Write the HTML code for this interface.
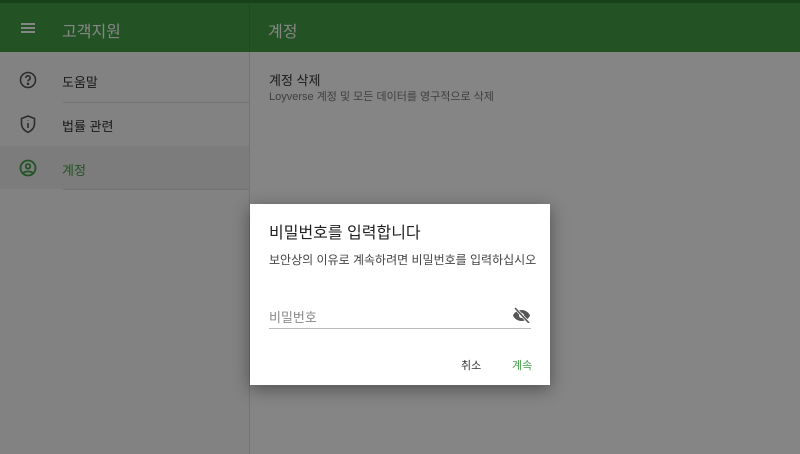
<!DOCTYPE html>
<html><head><meta charset="utf-8"><style>
*{margin:0;padding:0;box-sizing:border-box}
body{width:800px;height:454px;overflow:hidden;position:relative;background:#fff;font-family:"Liberation Sans","Noto Sans CJK KR",sans-serif}
.abs{position:absolute}
.hdr{left:0;top:0;width:800px;height:52px;background:#43a047}
.top{left:0;top:0;width:800px;height:3px;background:#2e7d32}
.side{left:0;top:52px;width:250px;height:402px;background:#fafafa;border-right:1px solid #ddd}
.sel{left:0;top:146px;width:249px;height:43px;background:#eee}
.div{height:1px;background:#ddd;left:63px;width:186px}
.t{white-space:nowrap}
.ov{left:0;top:0;width:800px;height:454px;background:rgba(0,0,0,0.48)}
.dlg{left:250px;top:204px;width:300px;height:181px;background:#fff;box-shadow:0 4px 16px rgba(0,0,0,.4)}
</style></head><body>
<div class="abs hdr"></div><div class="abs top"></div>
<div class="abs" style="left:249px;top:3px;width:1px;height:49px;background:#3a8f3e"></div>
<div class="abs" style="left:21px;top:23px;width:14px;height:2px;background:#fff;box-shadow:0 4px 0 #fff,0 8px 0 #fff"></div>
<div class="abs t" style="left:62px;top:18px;font-size:16px;color:#fff">고객지원</div>
<div class="abs t" style="left:268px;top:18px;font-size:16px;color:#fff">계정</div>
<div class="abs side"></div>
<div class="abs sel"></div>
<div class="abs div" style="top:102px"></div>
<div class="abs div" style="top:189px"></div>
<svg class="abs" style="left:19px;top:71px" width="18" height="18" viewBox="0 0 18 18" fill="none" stroke="#555" stroke-width="1.6"><circle cx="9" cy="9" r="7.5"/><path d="M6.8 7a2.2 2.2 0 1 1 3 2c-.6.3-.8.7-.8 1.4"/><circle cx="9" cy="12.8" r=".5" fill="#555"/></svg>
<div class="abs t" style="left:62px;top:72px;font-size:13px;color:#333">도움말</div>
<svg class="abs" style="left:20px;top:115px" width="16" height="19" viewBox="0 0 16 19" fill="none" stroke="#555" stroke-width="1.6"><path d="M8 1L1.5 3.5v5c0 4 2.8 7.5 6.5 8.8 3.7-1.3 6.5-4.8 6.5-8.8v-5z"/><path d="M8 8v5M8 5.5v.5"/></svg>
<div class="abs t" style="left:62px;top:116px;font-size:13px;color:#333">법률 관련</div>
<svg class="abs" style="left:19px;top:159px" width="18" height="18" viewBox="0 0 18 18" fill="none" stroke="#43a047" stroke-width="1.8"><circle cx="9" cy="9" r="7.5"/><circle cx="9" cy="7.3" r="2.3"/><path d="M4.5 14c1.5-2 7.5-2 9 0"/></svg>
<div class="abs t" style="left:62px;top:160px;font-size:13px;color:#43a047">계정</div>
<div class="abs t" style="left:269px;top:70px;font-size:13px;color:#333">계정 삭제</div>
<div class="abs t" style="left:269px;top:88px;font-size:11px;color:#777">Loyverse 계정 및 모든 데이터를 영구적으로 삭제</div>
<div class="abs ov"></div>
<div class="abs dlg">
<div class="abs t" style="left:19px;top:15px;font-size:16px;color:#222">비밀번호를 입력합니다</div>
<div class="abs t" style="left:19px;top:47px;font-size:12px;color:#444">보안상의 이유로 계속하려면 비밀번호를 입력하십시오</div>
<div class="abs t" style="left:19px;top:103px;font-size:13px;color:#888">비밀번호</div>
<div class="abs" style="left:19px;top:124px;width:262px;height:1px;background:#bbb"></div>
<svg class="abs" style="left:262px;top:103px" width="19" height="16" viewBox="0 0 19 16"><path d="M9.5 3C5 3 2 6 1 8.5 2 11 5 14 9.5 14S17 11 18 8.5C17 6 14 3 9.5 3z" fill="#555"/><circle cx="9.5" cy="8.5" r="2.5" fill="#fff"/><path d="M3 1l14 15" stroke="#fff" stroke-width="3"/><path d="M3 1l14 15" stroke="#555" stroke-width="1.6"/></svg>
<div class="abs t" style="left:211px;top:153px;font-size:11px;color:#333">취소</div>
<div class="abs t" style="left:262px;top:153px;font-size:11px;color:#43a047">계속</div>
</div>
</body></html>
